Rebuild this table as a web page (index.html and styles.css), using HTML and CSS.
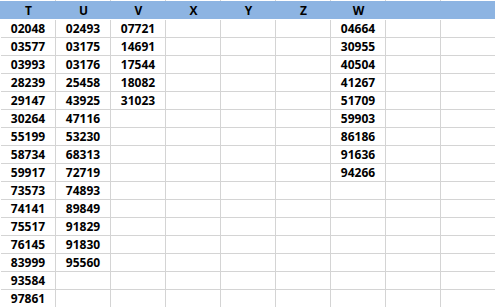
FILE: index.html
```html
<!DOCTYPE html>
<html>
<head>
<meta charset="utf-8">
<link rel="stylesheet" href="styles.css">
</head>
<body>
<div class="sheet">
  <div class="row top"><div class="t"></div><div class="t"></div><div class="t"></div><div class="t"></div><div class="t"></div><div class="t"></div><div class="t"></div><div class="t"></div><div class="t"></div></div>
  <div class="row head">
    <div class="h">T</div><div class="h">U</div><div class="h">V</div><div class="h">X</div><div class="h">Y</div><div class="h">Z</div><div class="h">W</div><div class="h"></div><div class="h"></div>
  </div>
  <div class="row"><div class="c">02048</div><div class="c">02493</div><div class="c">07721</div><div class="c"></div><div class="c"></div><div class="c"></div><div class="c">04664</div><div class="c"></div><div class="c"></div></div>
  <div class="row"><div class="c">03577</div><div class="c">03175</div><div class="c">14691</div><div class="c"></div><div class="c"></div><div class="c"></div><div class="c">30955</div><div class="c"></div><div class="c"></div></div>
  <div class="row"><div class="c">03993</div><div class="c">03176</div><div class="c">17544</div><div class="c"></div><div class="c"></div><div class="c"></div><div class="c">40504</div><div class="c"></div><div class="c"></div></div>
  <div class="row"><div class="c">28239</div><div class="c">25458</div><div class="c">18082</div><div class="c"></div><div class="c"></div><div class="c"></div><div class="c">41267</div><div class="c"></div><div class="c"></div></div>
  <div class="row"><div class="c">29147</div><div class="c">43925</div><div class="c">31023</div><div class="c"></div><div class="c"></div><div class="c"></div><div class="c">51709</div><div class="c"></div><div class="c"></div></div>
  <div class="row"><div class="c">30264</div><div class="c">47116</div><div class="c"></div><div class="c"></div><div class="c"></div><div class="c"></div><div class="c">59903</div><div class="c"></div><div class="c"></div></div>
  <div class="row"><div class="c">55199</div><div class="c">53230</div><div class="c"></div><div class="c"></div><div class="c"></div><div class="c"></div><div class="c">86186</div><div class="c"></div><div class="c"></div></div>
  <div class="row"><div class="c">58734</div><div class="c">68313</div><div class="c"></div><div class="c"></div><div class="c"></div><div class="c"></div><div class="c">91636</div><div class="c"></div><div class="c"></div></div>
  <div class="row"><div class="c">59917</div><div class="c">72719</div><div class="c"></div><div class="c"></div><div class="c"></div><div class="c"></div><div class="c">94266</div><div class="c"></div><div class="c"></div></div>
  <div class="row"><div class="c">73573</div><div class="c">74893</div><div class="c"></div><div class="c"></div><div class="c"></div><div class="c"></div><div class="c"></div><div class="c"></div><div class="c"></div></div>
  <div class="row"><div class="c">74141</div><div class="c">89849</div><div class="c"></div><div class="c"></div><div class="c"></div><div class="c"></div><div class="c"></div><div class="c"></div><div class="c"></div></div>
  <div class="row"><div class="c">75517</div><div class="c">91829</div><div class="c"></div><div class="c"></div><div class="c"></div><div class="c"></div><div class="c"></div><div class="c"></div><div class="c"></div></div>
  <div class="row"><div class="c">76145</div><div class="c">91830</div><div class="c"></div><div class="c"></div><div class="c"></div><div class="c"></div><div class="c"></div><div class="c"></div><div class="c"></div></div>
  <div class="row"><div class="c">83999</div><div class="c">95560</div><div class="c"></div><div class="c"></div><div class="c"></div><div class="c"></div><div class="c"></div><div class="c"></div><div class="c"></div></div>
  <div class="row"><div class="c">93584</div><div class="c"></div><div class="c"></div><div class="c"></div><div class="c"></div><div class="c"></div><div class="c"></div><div class="c"></div><div class="c"></div></div>
  <div class="row"><div class="c">97861</div><div class="c"></div><div class="c"></div><div class="c"></div><div class="c"></div><div class="c"></div><div class="c"></div><div class="c"></div><div class="c"></div></div>
</div>
</body>
</html>
```

FILE: styles.css
```css
html, body {
  margin: 0;
  padding: 0;
  background: #ffffff;
}

.sheet {
  padding-left: 1px;
  font-family: "Open Sans", "Liberation Sans", sans-serif;
  font-weight: 700;
  font-size: 12px;
  color: #000000;
}

.row {
  display: grid;
  grid-template-columns: repeat(9, 55px);
  height: 18px;
}

.top {
  height: 1px;
}

.t {
  box-sizing: border-box;
  border-right: 1px solid #d4d4d4;
}

.head {
  height: 18px;
  margin-left: -1px;
  padding-left: 1px;
  margin-bottom: 1px;
  background: #8db4e2;
}

.h {
  display: flex;
  align-items: center;
  justify-content: center;
  padding-top: 1px;
  line-height: 1;
}

.c {
  box-sizing: border-box;
  border-right: 1px solid #d4d4d4;
  border-bottom: 1px solid #d4d4d4;
  display: flex;
  align-items: center;
  justify-content: center;
  padding-top: 1px;
  line-height: 1;
}
```
